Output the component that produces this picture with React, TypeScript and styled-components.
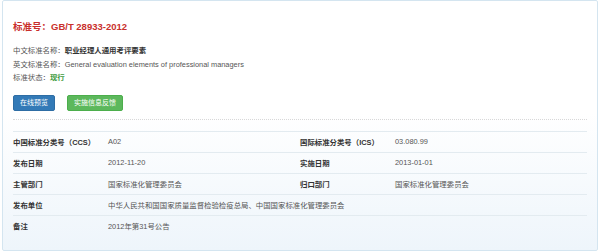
import styled, { createGlobalStyle } from 'styled-components';

const GlobalStyle = createGlobalStyle`
  * {
    box-sizing: border-box;
  }
  body {
    margin: 0;
    background: #fff;
    font-family: 'Liberation Sans', 'Noto Sans CJK SC', sans-serif;
  }
`;

type Field = {
  label: string;
  value: string;
};

type Row = Field[];

const rows: Row[] = [
  [
    { label: '中国标准分类号（CCS）', value: 'A02' },
    { label: '国际标准分类号（ICS）', value: '03.080.99' },
  ],
  [
    { label: '发布日期', value: '2012-11-20' },
    { label: '实施日期', value: '2013-01-01' },
  ],
  [
    { label: '主管部门', value: '国家标准化管理委员会' },
    { label: '归口部门', value: '国家标准化管理委员会' },
  ],
  [{ label: '发布单位', value: '中华人民共和国国家质量监督检验检疫总局、中国国家标准化管理委员会' }],
  [{ label: '备注', value: '2012年第31号公告' }],
];

export default function App() {
  return (
    <>
      <GlobalStyle />
      <SPanel>
        <SHeader>
          <STitle>标准号：GB/T 28933-2012</STitle>
          <SInfo>
            <SLine>
              中文标准名称：<SStrong>职业经理人通用考评要素</SStrong>
            </SLine>
            <SLine>英文标准名称：General evaluation elements of professional managers</SLine>
            <SLine>
              标准状态：<SStatus>现行</SStatus>
            </SLine>
          </SInfo>
          <SButtons>
            <SButton $tone="blue">在线预览</SButton>
            <SButton $tone="green">实施信息反馈</SButton>
          </SButtons>
        </SHeader>
        <STable>
          <tbody>
            {rows.map((row, i) => (
              <tr key={i}>
                {row.map((f) => (
                  <FieldCells key={f.label} field={f} wide={row.length === 1} />
                ))}
              </tr>
            ))}
          </tbody>
        </STable>
      </SPanel>
    </>
  );
}

const FieldCells = ({ field, wide }: { field: Field; wide: boolean }) => (
  <>
    <SLabel>{field.label}</SLabel>
    <SValue colSpan={wide ? 3 : 1}>{field.value}</SValue>
  </>
);

const SPanel = styled.div`
  margin: 0 2px;
  width: 596px;
  height: 251px;
  border: 1px solid #d4e5f0;
  border-radius: 2px;
  background: linear-gradient(to bottom, #ffffff 0%, #ffffff 45%, #eef5fb 100%);
  padding: 16px 10px 0 10px;
`;

const SHeader = styled.div`
  border-bottom: 1px dotted #d8d8d8;
  padding-bottom: 8px;
  margin-bottom: 11px;
`;

const STitle = styled.div`
  height: 20px;
  line-height: 20px;
  font-size: 9.5px;
  font-weight: bold;
  color: #c9302c;
`;

const SInfo = styled.div`
  margin-top: 7px;
`;

const SLine = styled.div`
  height: 13.5px;
  line-height: 13.5px;
  font-size: 7.4px;
  color: #555;
`;

const SStrong = styled.span`
  font-weight: bold;
  color: #333;
`;

const SStatus = styled.span`
  font-weight: bold;
  color: #3c9a3c;
`;

const SButtons = styled.div`
  display: flex;
  gap: 12px;
  margin-top: 10px;
`;

const SButton = styled.button<{ $tone: 'blue' | 'green' }>`
  height: 16px;
  padding: 0 6px;
  border: 1px solid ${(p) => (p.$tone === 'blue' ? '#2e6da4' : '#4cae4c')};
  border-radius: 2px;
  background: ${(p) => (p.$tone === 'blue' ? '#337ab7' : '#5cb85c')};
  color: #fff;
  font-family: inherit;
  font-size: 7px;
  line-height: 14px;
`;

const STable = styled.table`
  width: 573px;
  border-collapse: collapse;
  table-layout: fixed;
  font-size: 7.4px;

  tr {
    height: 21px;
    border-top: 1px solid #e3ebf0;
  }
`;

const SLabel = styled.td`
  width: 95px;
  padding: 0;
  font-weight: bold;
  color: #333;
  white-space: nowrap;
`;

const SValue = styled.td`
  width: 192px;
  padding: 0;
  color: #555;
  white-space: nowrap;
`;
